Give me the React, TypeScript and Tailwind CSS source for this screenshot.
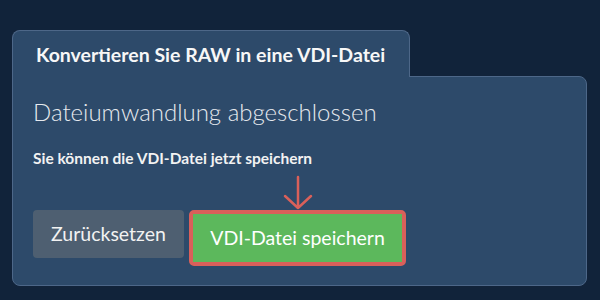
import React from "react";

export default function App() {
  return (
    <div
      className="w-[600px] h-[300px] bg-[#11233a] pt-[30px] pl-[12px] pr-[13px]"
      style={{ fontFamily: "Lato, 'Noto Sans', sans-serif" }}
    >
      <div className="flex flex-col">
        <div className="relative z-10 -mb-px h-[47px] w-[398px] rounded-t-lg border border-b-0 border-[#4d6788] bg-[#2d4a6a] pl-[23px] flex items-center">
          <span className="text-[19.5px] font-bold text-[#f7f7f7] leading-none pt-[1px]">
            Konvertieren Sie RAW in eine VDI-Datei
          </span>
        </div>
        <div className="h-[210px] rounded-b-lg rounded-tr-lg border border-[#4d6788] bg-[#2d4a6a] pl-[20px] pt-[20px]">
          <div className="text-[24px] font-light text-[#e6e9ee] leading-[30px]">
            Dateiumwandlung abgeschlossen
          </div>
          <div className="mt-[21px] text-[15.5px] font-bold text-[#f2f2f2] leading-[20px]">
            Sie können die VDI-Datei jetzt speichern
          </div>
          <div className="mt-[42px] flex items-start gap-[5px]">
            <button className="h-[48px] w-[151px] rounded-[4px] bg-[#4e5f71] text-[19.5px] text-[#f2f2f2]">
              Zurücksetzen
            </button>
            <div className="relative rounded-[5px] border-[4px] border-[#d9605a]">
              <svg
                className="absolute left-1/2 -translate-x-1/2 bottom-[calc(100%+4px)]"
                width="32"
                height="36"
                viewBox="0 0 32 36"
                fill="none"
              >
                <path
                  d="M16 3 V34 M3 22 L16 34 L29 22"
                  stroke="#d9605a"
                  strokeWidth="2.5"
                  strokeLinecap="round"
                  strokeLinejoin="round"
                />
              </svg>
              <button className="block h-[48px] w-[209px] bg-[#5cb85c] text-[19.5px] text-white">
                VDI-Datei speichern
              </button>
            </div>
          </div>
        </div>
      </div>
    </div>
  );
}
